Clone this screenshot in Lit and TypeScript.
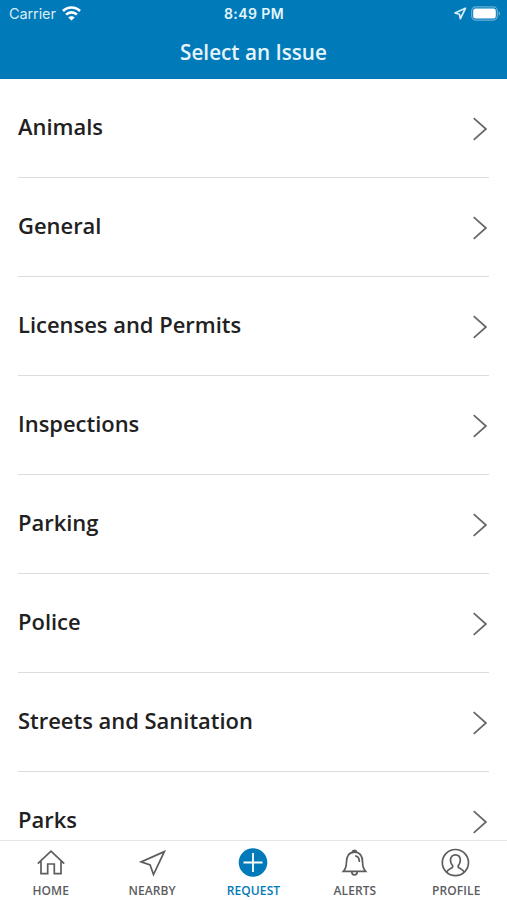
import { LitElement, html, css, svg } from "lit";
import { customElement } from "lit/decorators.js";
import { classMap } from "lit/directives/class-map.js";

const ISSUES = [
  "Animals", "General", "Licenses and Permits", "Inspections",
  "Parking", "Police", "Streets and Sanitation", "Parks",
];

const ICONS = {
  home: svg`<path d="M.8 14.700 14 2.200l13.200 12.500M4 12.200v12.500h6.700V15h6.600v9.700H24V12.200"/>`,
  nearby: svg`<path d="M26.300 2.600 3.100 12.900l9 3L15.500 25.500Z"/>`,
  request: svg`<circle class="disc" cx="14" cy="13.500" r="14.300"/><path class="plus" d="M14 4v19M4.500 13.500h19"/>`,
  alerts: svg`<path d="M11.300 2.900a2.400 2.400 0 0 1 4.400 0M2.400 22.400c2.700-2.800 3-4.600 3-8.800 0-6.200 2.500-10.400 8.100-10.400s8.100 4.200 8.100 10.400c0 4.200.4 6 3 8.800ZM10.800 22.700a2.700 3.200 0 0 0 5.400 0M14.200 6.800c3 .3 4.200 2.700 4.200 6.200"/>`,
  profile: svg`<circle cx="13.400" cy="13.600" r="13.100"/><path d="M4.700 23c.9-2.500 3.600-3.200 5.300-4.300 1-.7.900-1.700.2-2.600-1.300-1.600-1.700-2.900-1.700-4.700 0-3.700 1.900-5.500 4.900-5.500s4.900 1.800 4.900 5.500c0 1.800-.4 3.100-1.700 4.700-.7.900-.8 1.900.2 2.600 1.700 1.100 4.400 1.800 5.300 4.300"/>`,
};

const TABS = [
  { id: "home", label: "HOME" },
  { id: "nearby", label: "NEARBY" },
  { id: "request", label: "REQUEST" },
  { id: "alerts", label: "ALERTS" },
  { id: "profile", label: "PROFILE" },
] as const;

@customElement("status-bar")
class StatusBar extends LitElement {
  static styles = css`
    :host { display: grid; grid-template-columns: 1fr auto 1fr; align-items: center; height: 27px; padding: 0 6px 0 9px; color: #fff; font: 14.5px/27px Inter, "Liberation Sans", sans-serif; }
    .left { display: flex; align-items: center; gap: 6px; color: #d9edf7; }
    .carrier { letter-spacing: -0.1px; }
    .right { display: flex; align-items: center; justify-content: flex-end; gap: 4px; }
    .time { font-size: 14px; font-weight: 600; letter-spacing: 0.4px; color: #e6f5fc; padding-right: 2px; }
    svg { display: block; }
  `;
  render() {
    return html`
      <div class="left"><span class="carrier">Carrier</span>
        <svg width="19" height="15" viewBox="0 0 19 15" fill="none" stroke="#fff" stroke-width="2.700">
          <path d="M1 5C5.700.3 13.300.3 18 5M4.100 8.600c3-2.900 7.800-2.900 10.800 0"/>
          <path d="M6.300 11.400c1.600-1.600 4.800-1.600 6.400 0l-3.200 3.100Z" fill="#fff" stroke="none"/>
        </svg>
      </div>
      <div class="time">8:49 PM</div>
      <div class="right">
        <svg width="13" height="13" viewBox="0 0 13 13" fill="none" stroke="#d9effb" stroke-width="1.700" stroke-linejoin="round">
          <path d="M11.400 1.300 1 6l4.400 1.200 1 4.500Z"/>
        </svg>
        <svg width="30" height="15" viewBox="0 0 30 15">
          <rect x="0.700" y="0.900" width="25.600" height="13.200" rx="4" fill="none" stroke="#69b0d7" stroke-width="1.200"/>
          <rect x="2.200" y="2.500" width="22.600" height="10" rx="2.500" fill="#fff"/>
          <path d="M27.600 5.200c2 .8 2 3.800 0 4.600Z" fill="#69b0d7"/>
        </svg>
      </div>`;
  }
}

@customElement("issue-row")
class IssueRow extends LitElement {
  static properties = { label: {} };
  declare label: string;
  static styles = css`
    :host { display: flex; align-items: center; justify-content: space-between; box-sizing: border-box; height: 99px; flex: none; border-bottom: 1px solid #dcdcdc; padding-right: 2px; color: #212121; }
    .label { font: 550 21.94px/30px "Open Sans", sans-serif; padding-bottom: 2px; white-space: nowrap; }
    svg { display: block; margin-top: 2px; }
  `;
  render() {
    return html`<span class="label">${this.label}</span>
      <svg width="15" height="24" viewBox="0 0 15 24" fill="none" stroke="#66676a" stroke-width="1.700"><path d="M1.700 1.200 13.900 12 1.700 22.800"/></svg>`;
  }
}

@customElement("tab-bar")
class TabBar extends LitElement {
  static styles = css`
    :host { display: grid; grid-template-columns: repeat(5, 1fr); height: 60px; box-sizing: border-box; border-top: 1px solid #e6e6e6; padding-top: 8px; background: #fff; }
    .tab { display: flex; flex-direction: column; align-items: center; color: #5c5d5f; gap: 5px; }
    .active { color: #007ab8; }
    .name { font: 600 12px/18px "Open Sans", sans-serif; letter-spacing: 0.1px; }
    svg { display: block; overflow: visible; fill: none; stroke: currentColor; stroke-width: 1.700; stroke-linejoin: miter; }
    .disc { fill: currentColor; stroke: none; }
    .plus { stroke: #fff; stroke-width: 1.800; }
  `;
  render() {
    return TABS.map((t) => html`
      <div class=${classMap({ tab: true, active: t.id === "request" })}>
        <svg width="28" height="28" viewBox="0 0 28 28">${ICONS[t.id]}</svg>
        <span class="name">${t.label}</span>
      </div>`);
  }
}

@customElement("app-root")
class AppRoot extends LitElement {
  static styles = css`
    :host { display: flex; flex-direction: column; height: 900px; background: #fff; overflow: hidden; }
    .header { flex: none; height: 79px; background: #007ab8; }
    .title { margin: 0; text-align: center; color: #e6f5fc; font: 550 20.7px/51px "Open Sans", sans-serif; }
    .list { flex: 1; min-height: 0; overflow: hidden; display: flex; flex-direction: column; padding: 0 18px; }
  `;
  render() {
    return html`
      <header class="header"><status-bar></status-bar><h1 class="title">Select an Issue</h1></header>
      <main class="list">${ISSUES.map((i) => html`<issue-row .label=${i}></issue-row>`)}</main>
      <tab-bar></tab-bar>`;
  }
}
